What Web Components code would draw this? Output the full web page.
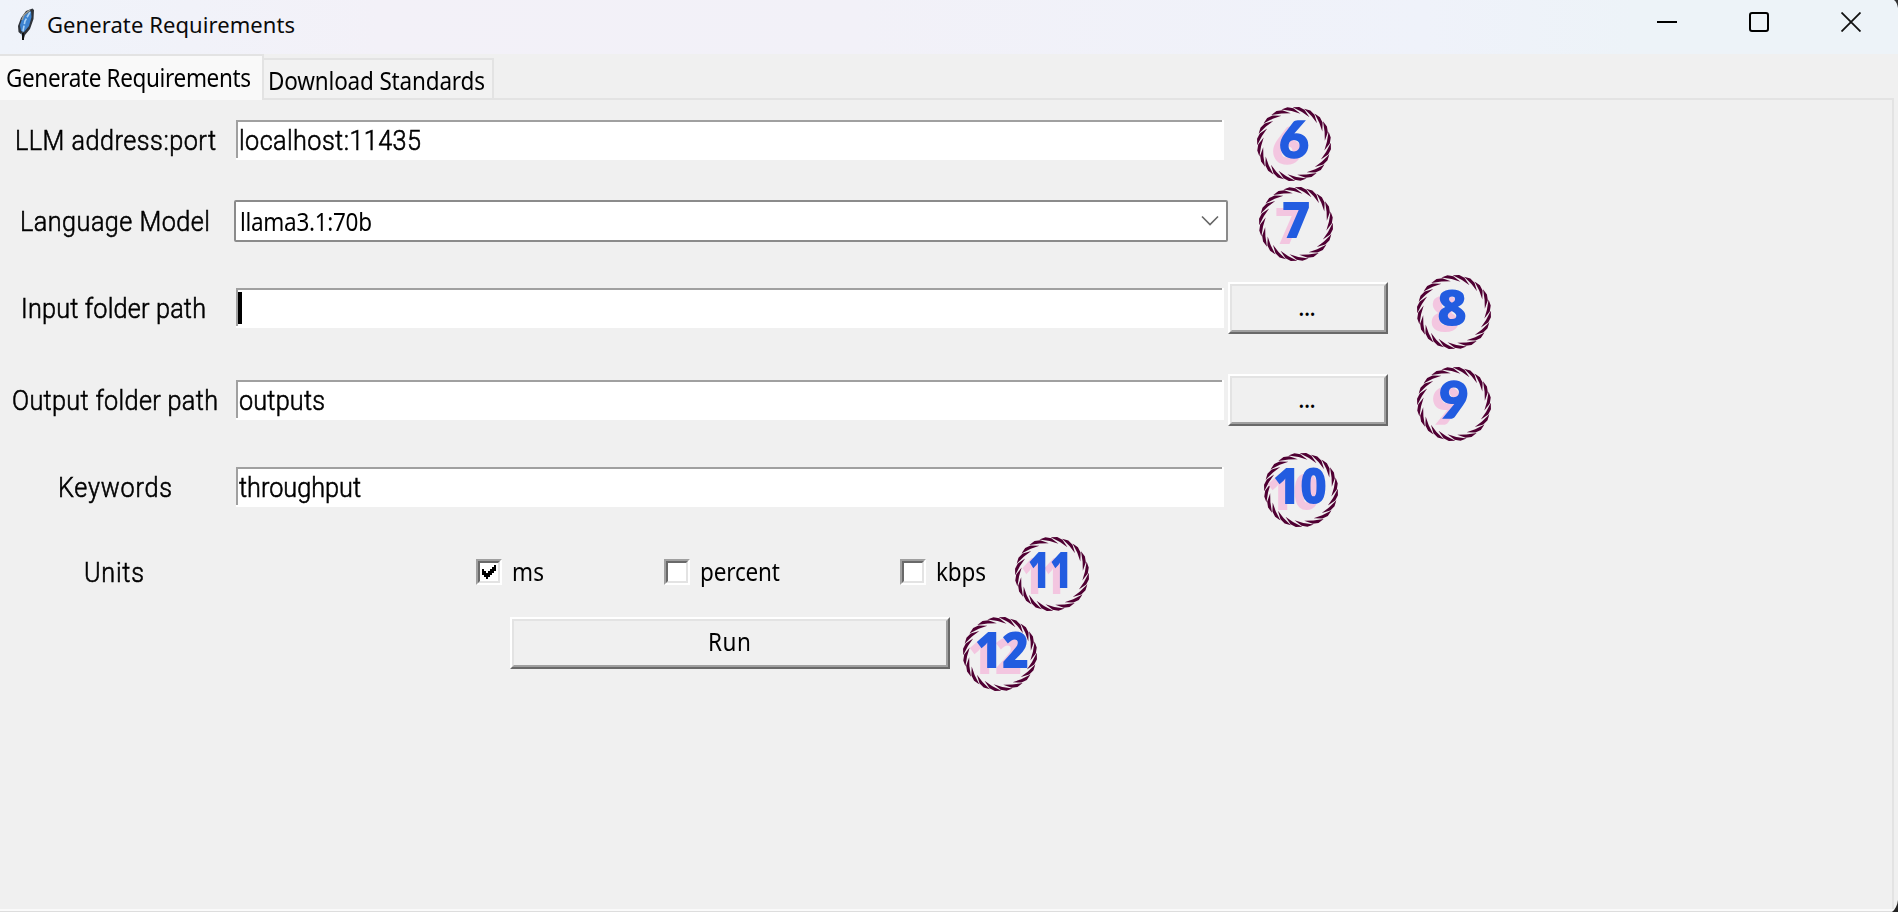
<!DOCTYPE html>
<html lang="en"><head><meta charset="utf-8"><title>Generate Requirements</title>
<style>html,body{margin:0;background:#f0f0f0;overflow:hidden}</style></head>
<body><app-window></app-window>
<script>
const make=(name,css,html,after)=>customElements.define(name,class extends HTMLElement{
 constructor(){super();this.attachShadow({mode:'open'})}
 connectedCallback(){this.shadowRoot.innerHTML='<style>*{box-sizing:border-box}'+css+'</style>'+(typeof html==='function'?html(this):html);if(after)after(this)}
});
// Slightly condensed text whose tracking is adjusted so that it spans a set width
make('fit-text',':host{display:inline-block;white-space:pre;flex:none}span{display:inline-block;white-space:pre;transform-origin:0 50%}',
 '<span><slot></slot></span>',el=>{
  const w=+el.getAttribute('w'),k=+(el.getAttribute('k')||.9),s=el.shadowRoot.querySelector('span');
  const n=s.getBoundingClientRect().width,c=el.textContent.length;
  const ls=(w/k-n)/(c-1);
  s.style.letterSpacing=ls+'px';s.style.transform=`scaleX(${k})`;el.style.width=w+'px';
 });
make('title-bar',`:host{display:flex;align-items:center;height:54px;background:linear-gradient(90deg,#eff3fa 0,#f3f1f8 20%,#f2f1f8 45%,#eff2fa 75%,#edf3f8 86%,#edf3f8 100%);padding:0 0 6px 15px;font:22px "Noto Sans",sans-serif;color:#0a0a0a;position:relative}
 .feather{width:22px;height:34px;margin:0 10px 0 0}.sp{flex:1}.btns{display:flex;gap:72px;margin-right:37px;margin-top:-4px;align-items:center}
 .corner{position:absolute;right:0;top:0}`,
 `<svg class="feather" viewBox="0 0 22 34"><path d="M17.500 1.500L19 3L18.500 12L15 22L10 28L8.500 33H7V28L3.500 25L3 19L6 11L11 4Z" fill="#30343a"/><path d="M16 4L8 9L5 18L6 24L9 25L14 19L16.500 10Z" fill="#3d83d0"/><path d="M15 3L9 8L7 13" stroke="#9b9b93" stroke-width="1.500" fill="none"/><path d="M15 5L10 14L7 29" stroke="#a9d2f5" stroke-width="1.600" fill="none" stroke-dasharray="6 1.500"/><path d="M8 26V33" stroke="#111" stroke-width="2"/></svg>
 <fit-text w="248" k="1">Generate Requirements</fit-text><span class="sp"></span>
 <div class="btns"><svg width="20" height="20"><path d="M0 10H20" stroke="#000" stroke-width="2"/></svg>
 <svg width="20" height="20"><rect x="1" y="1" width="18" height="18" rx="2" fill="none" stroke="#000" stroke-width="2"/></svg>
 <svg width="20" height="20"><path d="M.5 .5L19.500 19.500M19.500 .5L.5 19.500" stroke="#111" stroke-width="1.800"/></svg></div>
 <svg class="corner" width="5" height="8"><path d="M1 0H5V8Q4 2 1 0Z" fill="#333"/></svg>`);
make('tab-item',`:host{display:flex;align-items:center;justify-content:center;font:25px "Noto Sans",sans-serif;color:#000;height:42px;width:230px;border:solid #e3e3e3;border-width:2px 2px 2px 0;background:#f2f2f2;padding:2px 3px 0 0}
 :host([active]){height:46px;width:264px;background:#f9f9f9;border-bottom:0;padding:0 5px 3px 0}`,`<slot></slot>`);
make('tab-strip',`:host{display:flex;align-items:flex-end;height:46px;position:relative;width:1894px}
 .line{flex:1;height:2px;background:#e3e3e3}`,`<slot></slot><span class="line"></span>`);
make('form-row',`:host{display:flex;align-items:center;height:var(--h,40px);margin-top:var(--gap,0px)}
 .l{width:230px;display:flex;justify-content:center;flex:none;font:300 28px Roboto,sans-serif;-webkit-text-stroke:.6px #000;margin-right:1px}`,
 `<span class="l"><slot name="label"></slot></span><slot></slot>`);
make('text-entry',`:host{display:flex;align-items:center;position:relative;margin-left:5px;width:988px;height:40px;background:#fff;font:300 28px Roboto,sans-serif;-webkit-text-stroke:.6px #000;padding-left:3px}
 .t{position:absolute;left:0;top:0;width:986px;height:38px;border:solid #a0a0a0;border-width:2px 0 0 2px}
 :host([focused])::before{content:"";position:absolute;left:2px;top:4px;width:4px;height:32px;background:#000}`,`<span class="t"></span><slot></slot>`);
make('combo-box',`:host{display:flex;align-items:center;justify-content:space-between;margin-left:3px;width:994px;height:42px;border:2px solid #8b8b8b;border-radius:2px;background:#fff;font:25px "Noto Sans",sans-serif;padding:0 7px 0 4px}
 ::slotted(*){margin-top:-1px}`,
 `<slot></slot><svg width="18" height="12"><path d="M1 1.500L9 9.500L17 1.500" fill="none" stroke="#666" stroke-width="1.600"/></svg>`);
make('push-button',`:host{display:flex;align-items:center;justify-content:center;width:160px;height:52px;margin-left:4px;border:2px solid;border-color:#fff #696969 #696969 #fff;font:25px "Noto Sans",sans-serif}
 div{display:flex;align-items:center;justify-content:center;width:100%;height:100%;border:2px solid;border-color:#e3e3e3 #a0a0a0 #a0a0a0 #e3e3e3;padding:0 2px 4px 0}`,`<div><slot></slot></div>`);
make('check-box',`:host{display:flex;align-items:center;gap:10px;font:25px "Noto Sans",sans-serif}
 i{display:block;width:26px;height:26px;border:2px solid;border-color:#a0a0a0 #fff #fff #a0a0a0;flex:none}
 ::slotted(*){margin-top:-2px}
 b{display:block;width:22px;height:22px;border:2px solid;border-color:#696969 #e3e3e3 #e3e3e3 #696969;background:#fff}svg{display:none}:host([checked]) svg{display:block}`,
 `<i><b><svg width="18" height="18" shape-rendering="crispEdges"><path d="M2 6H4V8H6V10H8V8H10V6H12V4H14V2H16V8H14V10H12V12H10V14H8V16H6V14H4V12H2Z"/></svg></b></i><slot></slot>`);
// Numbered marker with a rope-like ring
make('step-badge',`:host{position:absolute;width:76px;height:76px;transform:translate(-50%,-50%)}svg{display:block;overflow:visible}
 text{font:800 50px "Open Sans",sans-serif;text-anchor:middle;fill:#225ce0}.lato{font:900 51px Lato,sans-serif;stroke:#225ce0;stroke-width:1.6px}
 .n{filter:drop-shadow(-6.5px 6px 0 #f3c6e0)}`,
 el=>{const n=el.getAttribute('n'),dx=+(el.getAttribute('dx')||0);let p='';
 const N=20,P=(r,a)=>{a=a*Math.PI/180;return (r*Math.cos(a)).toFixed(2)+' '+(r*Math.sin(a)).toFixed(2)};
 for(let i=0;i<N;i++){const a=i*360/N;p+=`M${P(36.8,a-2)}L${P(37.3,a+8)}L${P(35.8,a+17)}L${P(31,a+30)}L${P(33,a+14)}Z`}
 const c=/[69]/.test(n)?'class="lato"':'',w=el.getAttribute('w');
 return `<svg width="76" height="76" viewBox="-38 -38 76 76"><path d="${p}" fill="#500033"/><g class="n"><text ${c} x="${dx}" y="13.500" textLength="${w}" lengthAdjust="spacingAndGlyphs">${n}</text></g></svg>`});
make('app-window',`:host{display:block;position:relative;width:1898px;height:912px;background:#f0f0f0;overflow:hidden;color:#000}
 main{box-sizing:border-box;width:1894px;height:809px;border-right:2px solid #e3e3e3;padding-top:20px}
 .foot{height:3px;background:#fafafa;border-bottom:1px solid #ddd;box-sizing:border-box}
 .corner{position:absolute;right:0;bottom:0}`,
 `<title-bar></title-bar><tab-strip><tab-item active><fit-text w="245">Generate Requirements</fit-text></tab-item><tab-item><fit-text w="217">Download Standards</fit-text></tab-item></tab-strip>
 <main>
 <form-row><fit-text slot="label" w="201">LLM address:port</fit-text><text-entry><fit-text w="182">localhost:11435</fit-text></text-entry></form-row>
 <form-row style="--h:42px;--gap:40px"><fit-text slot="label" w="190">Language Model</fit-text><combo-box><fit-text w="132">llama3.1:70b</fit-text></combo-box></form-row>
 <form-row style="--h:52px;--gap:40px"><fit-text slot="label" w="185" style="margin-right:3px">Input folder path</fit-text><text-entry focused></text-entry><push-button><fit-text w="18" k="1">...</fit-text></push-button></form-row>
 <form-row style="--h:52px;--gap:40px"><fit-text slot="label" w="206">Output folder path</fit-text><text-entry><fit-text w="86">outputs</fit-text></text-entry><push-button><fit-text w="18" k="1">...</fit-text></push-button></form-row>
 <form-row style="--gap:41px"><fit-text slot="label" w="114">Keywords</fit-text><text-entry><fit-text w="122">throughput</fit-text></text-entry></form-row>
 <form-row style="--h:26px;--gap:52px"><fit-text slot="label" w="60" style="margin-right:2px">Units</fit-text><check-box checked style="margin-left:245px"><fit-text w="32">ms</fit-text></check-box><check-box style="margin-left:120px"><fit-text w="80">percent</fit-text></check-box><check-box style="margin-left:120px"><fit-text w="50">kbps</fit-text></check-box></form-row>
 <push-button style="width:440px;margin:32px 0 0 510px"><fit-text w="43">Run</fit-text></push-button>
 </main><div class="foot"></div>
 <step-badge n="6" w="30" style="left:1293.5px;top:143.5px"></step-badge>
 <step-badge n="7" w="29" style="left:1296px;top:224px"></step-badge>
 <step-badge n="8" w="30" dx="-2" style="left:1453.7px;top:311.7px"></step-badge>
 <step-badge n="9" w="30" style="left:1453.7px;top:403.5px"></step-badge>
 <step-badge n="10" w="54" dx="-1" style="left:1301px;top:489.6px"></step-badge>
 <step-badge n="11" w="44" dx="-2" style="left:1051.7px;top:573.7px"></step-badge>
 <step-badge n="12" w="54" dx="2" style="left:1000px;top:654px"></step-badge>
 <svg class="corner" width="6" height="12"><path d="M6 0V12H0Q5 8 6 0Z" fill="#222"/></svg>`);
</script></body></html>
